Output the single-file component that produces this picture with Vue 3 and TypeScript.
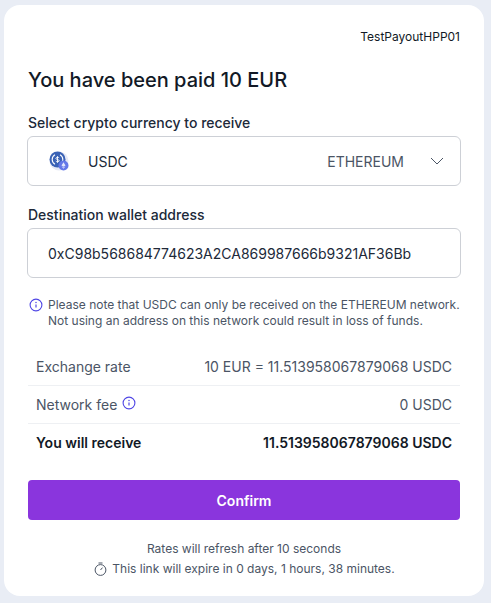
<script setup lang="ts">
const rows = [
  { label: 'Exchange rate', value: '10 EUR = 11.513958067879068 USDC', info: false, strong: false },
  { label: 'Network fee', value: '0 USDC', info: true, strong: false },
  { label: 'You will receive', value: '11.513958067879068 USDC', info: false, strong: true },
]
</script>

<template>
  <div class="page">
    <main class="card">
      <div class="ref">TestPayoutHPP01</div>
      <h1 class="title">You have been paid 10 EUR</h1>

      <div class="label first">Select crypto currency to receive</div>
      <div class="box select">
        <svg class="coin" width="20" height="20" viewBox="0 0 20 20">
          <circle cx="10" cy="10" r="9.500" fill="#e6e9f5" />
          <circle cx="8.500" cy="8.500" r="8" fill="#3a62b5" />
          <path d="M6 3.700a5.500 5.500 0 0 0 0 9.600M11 3.700a5.500 5.500 0 0 1 0 9.600" fill="none" stroke="#fff" stroke-width="1.100" />
          <path d="M8.500 5.200v6.600M10.200 6.900c-.5-.8-3.200-.9-3.300.5-.1 1.500 3.500 1 3.400 2.400-.1 1.200-3 1.200-3.500.3" fill="none" stroke="#fff" stroke-width=".9" />
          <circle cx="14.500" cy="14.500" r="5" fill="#6478e8" />
          <path d="M14.500 11.300l2 3.300-2 1.200-2-1.200zM12.500 15.200l2 1.200 2-1.200-2 2.600z" fill="#e3e7fc" />
        </svg>
        <span class="coin-name">USDC</span>
        <span class="network">ETHEREUM</span>
        <svg class="chevron" width="14" height="8" viewBox="0 0 14 8">
          <path d="M1 1l6 6 6-6" fill="none" stroke="#4b5565" stroke-width="1" />
        </svg>
      </div>

      <div class="label second">Destination wallet address</div>
      <div class="box address">0xC98b568684774623A2CA869987666b9321AF36Bb</div>

      <div class="note">
        <svg class="info" width="14" height="14" viewBox="0 0 14 14">
          <circle cx="7" cy="7" r="5.900" fill="none" stroke="#4f46e5" stroke-width="1.100" />
          <path d="M7 6.400v3.200" stroke="#4f46e5" stroke-width="1.200" />
          <circle cx="7" cy="4.500" r=".75" fill="#4f46e5" />
        </svg>
        <p>Please note that USDC can only be received on the ETHEREUM network.<br />Not using an address on this network could result in loss of funds.</p>
      </div>

      <div class="table">
        <div v-for="row in rows" :key="row.label" class="row" :class="{ strong: row.strong }">
          <span class="row-label">
            {{ row.label }}
            <svg v-if="row.info" class="info-small" width="14" height="14" viewBox="0 0 14 14">
              <circle cx="7" cy="7" r="5.900" fill="none" stroke="#4f46e5" stroke-width="1.100" />
              <path d="M7 6.400v3.200" stroke="#4f46e5" stroke-width="1.200" />
              <circle cx="7" cy="4.500" r=".75" fill="#4f46e5" />
            </svg>
          </span>
          <span>{{ row.value }}</span>
        </div>
      </div>

      <button class="confirm" type="button">Confirm</button>

      <div class="foot">
        <div>Rates will refresh after 10 seconds</div>
        <div class="expire">
          <svg width="14" height="14" viewBox="0 0 14 14">
            <circle cx="7.500" cy="8" r="5.400" fill="none" stroke="#4b5565" stroke-width="1" />
            <path d="M5.500 1h4M7.500 8l2-2.400" fill="none" stroke="#4b5565" stroke-width="1" />
          </svg>
          <span>This link will expire in 0 days, 1 hours, 38 minutes.</span>
        </div>
      </div>
    </main>
  </div>
</template>

<style>
html, body { margin: 0; background: #e9edf5; }
</style>

<style scoped>
.page {
  width: 491px;
  height: 603px;
  box-sizing: border-box;
  padding: 5px 7px 7px 4px;
  background: #e9edf5;
  font-family: Inter, "Liberation Sans", sans-serif;
  overflow: hidden;
}
.card {
  box-sizing: border-box;
  height: 591px;
  padding: 25px 24px 0;
  background: #fff;
  border-radius: 16px;
  display: flex;
  flex-direction: column;
}
.ref {
  font-size: 12px;
  line-height: 14px;
  text-align: right;
  color: #121926;
}
.title {
  margin: 22px 0 0;
  font-size: 20px;
  line-height: 28px;
  font-weight: 500;
  color: #121926;
}
.label {
  font-size: 14px;
  line-height: 20px;
  font-weight: 500;
  color: #202939;
}
.label.first { margin-top: 19px; }
.label.second { margin-top: 19px; }
.box {
  box-sizing: border-box;
  height: 50px;
  margin: 3px -1px 0;
  border: 1px solid #cdd0d6;
  border-radius: 6px;
  display: flex;
  align-items: center;
  font-size: 14px;
  color: #202939;
}
.select { padding: 0 16px 0 21px; }
.coin { flex: none; }
.coin-name { margin-left: 19px; }
.network { margin-left: auto; color: #4b5565; }
.chevron { margin-left: 26px; flex: none; }
.address { padding-left: 20px; }
.note {
  display: flex;
  gap: 5px;
  margin-top: 19px;
  padding-left: 1px;
  font-size: 12px;
  line-height: 16px;
  color: #4b5565;
}
.note p { margin: 0; white-space: nowrap; }
.info { flex: none; margin-top: 1px; }
.table { margin-top: 19px; }
.row {
  height: 38px;
  padding: 0 8px;
  box-sizing: border-box;
  display: flex;
  justify-content: space-between;
  align-items: center;
  font-size: 14px;
  color: #4b5565;
  border-bottom: 1px solid #eef0f3;
}
.row:last-child { border-bottom: 0; height: 37px; }
.row.strong { font-weight: 600; color: #121926; }
.row-label { display: flex; align-items: center; gap: 5px; }
.info-small { margin-top: -4px; }
.confirm {
  margin-top: 19px;
  height: 40px;
  border: 0;
  border-radius: 4px;
  background: #8a35dd;
  color: #fff;
  font: 600 14px Inter, "Liberation Sans", sans-serif;
}
.foot {
  margin-top: 19px;
  font-size: 12px;
  line-height: 20px;
  text-align: center;
  color: #4b5565;
}
.expire {
  display: flex;
  justify-content: center;
  align-items: center;
  gap: 5px;
}
</style>
